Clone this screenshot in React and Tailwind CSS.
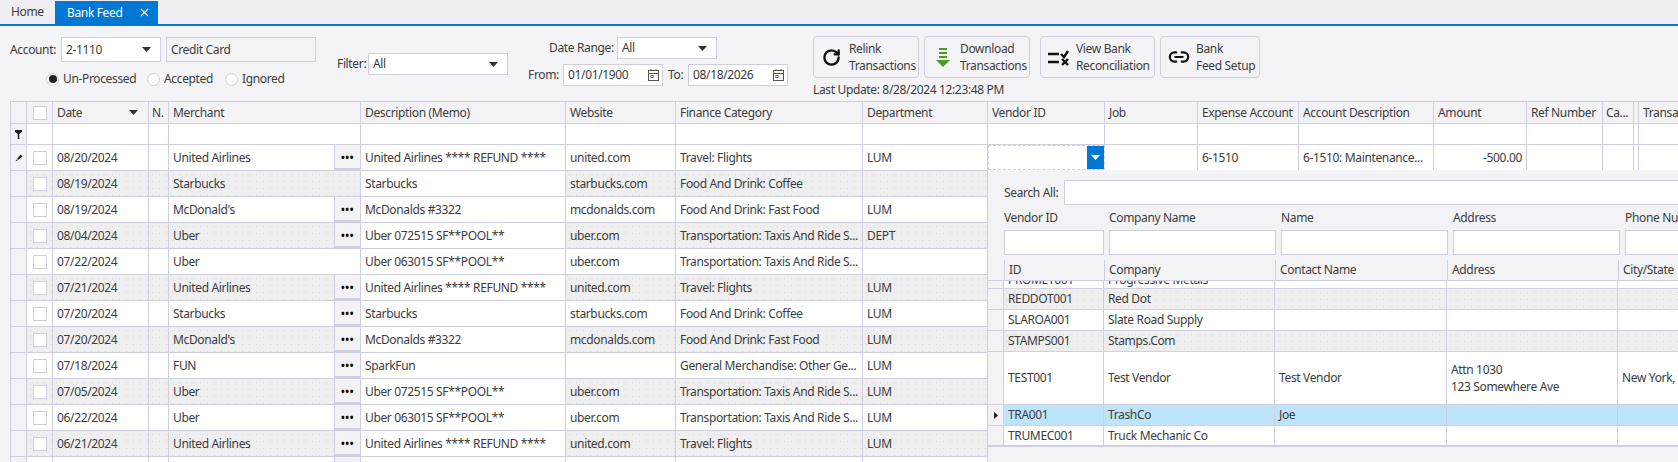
import React from "react";
import { Link2, RotateCw, X } from "lucide-react";

const line = "border-[#cfcfdf]";

const Caret = ({ className = "" }) => (
  <svg width="9" height="5" viewBox="0 0 9 5" className={className}><path d="M0 0h9L4.5 5z" fill="currentColor" /></svg>
);

const Calendar = () => (
  <svg width="13" height="14" viewBox="0 0 13 14" fill="none" stroke="#555">
    <rect x="1.5" y="2.5" width="10" height="10" />
    <path d="M1.5 5.5h10M4 1v2M9 1v2" />
    <rect x="4" y="7.5" width="2" height="2" />
  </svg>
);

const Combo = ({ value, className }) => (
  <div className={`flex items-center justify-between border ${line} bg-white pl-[4px] pr-[9px] ${className}`}>
    <span>{value}</span>
    <Caret className="text-[#333]" />
  </div>
);

const DateBox = ({ value, className }) => (
  <div className={`flex items-center justify-between border ${line} bg-white pl-[4px] pr-[2px] w-[100px] h-[22px] ${className}`}>
    <span>{value}</span>
    <Calendar />
  </div>
);

const Radio = ({ label, checked, className }) => (
  <div className={`flex items-center ${className}`}>
    <span className={`flex h-[13px] w-[13px] items-center justify-center rounded-full border ${line} bg-white`}>
      {checked && <span className="h-[8px] w-[8px] rounded-full bg-[#222]" />}
    </span>
    <span className="ml-[4px]">{label}</span>
  </div>
);

const ToolButton = ({ icon, top, bottom, className, textClass }) => (
  <div className={`flex h-[42px] items-center rounded-[4px] border ${line} ${className}`}>
    <div className="flex w-[35px] shrink-0 justify-center">{icon}</div>
    <div className={`leading-[17px] ${textClass}`}>
      <div>{top}</div>
      <div>{bottom}</div>
    </div>
  </div>
);

const Check = () => <span className={`block h-[14px] w-[14px] border ${line} bg-white`} />;

const columns = [
  { k: "date", w: "w-[96px]", label: "Date" },
  { k: "n", w: "w-[20px]", label: "N." },
  { k: "merchant", w: "w-[192px]", label: "Merchant" },
  { k: "desc", w: "w-[205px]", label: "Description (Memo)" },
  { k: "site", w: "w-[110px]", label: "Website" },
  { k: "cat", w: "w-[187px]", label: "Finance Category" },
  { k: "dept", w: "w-[125px]", label: "Department" },
  { k: "vendor", w: "w-[117px]", label: "Vendor ID" },
  { k: "job", w: "w-[93px]", label: "Job" },
  { k: "exp", w: "w-[101px]", label: "Expense Account" },
  { k: "acct", w: "w-[135px]", label: "Account Description" },
  { k: "amt", w: "w-[93px]", label: "Amount" },
  { k: "ref", w: "w-[76px]", label: "Ref Number" },
  { k: "ca", w: "w-[31px]", label: "Ca..." },
  { k: "tiny", w: "w-[5px]", label: "" },
  { k: "tr", w: "w-[120px]", label: "Transaction" },
];

const rows = [
  { date: "08/20/2024", merchant: "United Airlines", btn: true, desc: "United Airlines **** REFUND ****", site: "united.com", cat: "Travel: Flights", dept: "LUM", exp: "6-1510", acct: "6-1510: Maintenance...", amt: "-500.00" },
  { date: "08/19/2024", merchant: "Starbucks", desc: "Starbucks", site: "starbucks.com", cat: "Food And Drink: Coffee" },
  { date: "08/19/2024", merchant: "McDonald's", btn: true, desc: "McDonalds #3322", site: "mcdonalds.com", cat: "Food And Drink: Fast Food", dept: "LUM" },
  { date: "08/04/2024", merchant: "Uber", btn: true, desc: "Uber 072515 SF**POOL**", site: "uber.com", cat: "Transportation: Taxis And Ride S...", dept: "DEPT" },
  { date: "07/22/2024", merchant: "Uber", desc: "Uber 063015 SF**POOL**", site: "uber.com", cat: "Transportation: Taxis And Ride S..." },
  { date: "07/21/2024", merchant: "United Airlines", btn: true, desc: "United Airlines **** REFUND ****", site: "united.com", cat: "Travel: Flights", dept: "LUM" },
  { date: "07/20/2024", merchant: "Starbucks", btn: true, desc: "Starbucks", site: "starbucks.com", cat: "Food And Drink: Coffee", dept: "LUM" },
  { date: "07/20/2024", merchant: "McDonald's", btn: true, desc: "McDonalds #3322", site: "mcdonalds.com", cat: "Food And Drink: Fast Food", dept: "LUM" },
  { date: "07/18/2024", merchant: "FUN", btn: true, desc: "SparkFun", site: "", cat: "General Merchandise: Other Ge...", dept: "LUM" },
  { date: "07/05/2024", merchant: "Uber", btn: true, desc: "Uber 072515 SF**POOL**", site: "uber.com", cat: "Transportation: Taxis And Ride S...", dept: "LUM" },
  { date: "06/22/2024", merchant: "Uber", btn: true, desc: "Uber 063015 SF**POOL**", site: "uber.com", cat: "Transportation: Taxis And Ride S...", dept: "LUM" },
  { date: "06/21/2024", merchant: "United Airlines", btn: true, desc: "United Airlines **** REFUND ****", site: "united.com", cat: "Travel: Flights", dept: "LUM" },
  { date: "", merchant: "", btn: true, desc: "", site: "", cat: "", dept: "" },
];

const dither = "bg-[#efeff0] bg-[radial-gradient(#d6d6d6_0.6px,transparent_0.7px)] bg-[length:7px_7px]";

const HeaderRow = () => (
  <div className={`flex h-[22px] w-max border-b ${line} bg-[#f3f3f6]`}>
    <div className={`h-full w-[17px] border-x ${line}`} />
    <div className={`flex h-full w-[26px] items-center justify-center border-r ${line}`}><Check /></div>
    {columns.map((c) => (
      <div key={c.k} className={`flex h-full items-center overflow-hidden whitespace-nowrap border-r ${line} ${c.w} ${c.k === "n" || c.k === "ca" ? "pl-[3px]" : "pl-[4px]"} ${c.k === "date" ? "justify-between pr-[10px]" : ""}`}>
        <span>{c.label}</span>
        {c.k === "date" && <Caret className="text-[#333]" />}
      </div>
    ))}
  </div>
);

const FilterRow = () => (
  <div className={`flex h-[21px] w-max border-b ${line} bg-white`}>
    <div className={`flex h-full w-[17px] items-center justify-center border-x ${line} bg-[#f3f3f6]`}>
      <svg width="7" height="9" viewBox="0 0 7 9" fill="#222"><path d="M0 0h7v2L4.3 4v5H2.7V4L0 2z" /></svg>
    </div>
    <div className={`h-full w-[26px] border-r ${line}`} />
    {columns.map((c) => <div key={c.k} className={`h-full border-r ${line} ${c.w}`} />)}
  </div>
);

const DataRow = ({ r, i }) => {
  const gray = i % 2 === 1;
  const bg = gray ? dither : "bg-white";
  return (
    <div className={`flex w-max border-b ${line} ${i === 0 ? "h-[26px]" : "h-[26px]"}`}>
      <div className={`flex h-full w-[17px] items-center justify-center border-x ${line} bg-[#f3f3f6]`}>
        {i === 0 && (
          <svg width="8" height="8" viewBox="0 0 8 8" fill="#222"><path d="M5.5.5 7.5 2.5 3 6 2 5zM1.6 5.4l1 1L.5 7.5z" /></svg>
        )}
      </div>
      <div className={`flex h-full w-[26px] items-center justify-center border-r ${line} ${bg}`}><Check /></div>
      {columns.map((c) => {
        const base = `relative flex h-full items-center overflow-hidden whitespace-nowrap border-r ${line} ${c.w}`;
        if (c.k === "desc") return <div key={c.k} className={`${base} bg-white pl-[4px]`}>{r.desc}</div>;
        if (c.k === "merchant") {
          return (
            <div key={c.k} className={`${base} ${bg}`}>
              <span className="flex-1 pl-[4px]">{r.merchant}</span>
              {r.btn && (
                <span className={`flex h-full w-[26px] items-center justify-center border-b-2 border-l ${line} bg-[#f3f3f6] text-[10px] font-bold tracking-[0.5px] text-black`}>•••</span>
              )}
            </div>
          );
        }
        if (c.k === "vendor" && i === 0) {
          return (
            <div key={c.k} className={`${base} justify-end border border-dashed border-[#8fa6bd] bg-white`}>
              <span className="flex h-full w-[17px] items-center justify-center bg-[#0078d4] text-white"><Caret /></span>
            </div>
          );
        }
        return (
          <div key={c.k} className={`${base} ${bg} pl-[4px] ${c.k === "amt" ? "justify-end pr-[4px]" : ""}`}>{r[c.k]}</div>
        );
      })}
    </div>
  );
};

const popupCols = [
  { k: "id", w: "w-[100px]", label: "ID" },
  { k: "co", w: "w-[171px]", label: "Company" },
  { k: "contact", w: "w-[172px]", label: "Contact Name" },
  { k: "addr", w: "w-[171px]", label: "Address" },
  { k: "city", w: "w-[100px]", label: "City/State" },
];

const popupRows = [
  { id: "REDDOT001", co: "Red Dot", h: "h-[21px]", gray: true },
  { id: "SLAROA001", co: "Slate Road Supply", h: "h-[21px]" },
  { id: "STAMPS001", co: "Stamps.Com", h: "h-[21px]", gray: true },
  { id: "TEST001", co: "Test Vendor", contact: "Test Vendor", addr: ["Attn 1030", "123 Somewhere Ave"], city: "New York,", h: "h-[53px]" },
  { id: "TRA001", co: "TrashCo", contact: "Joe", h: "h-[21px]", sel: true },
  { id: "TRUMEC001", co: "Truck Mechanic Co", h: "h-[21px]" },
];

const Popup = () => (
  <div className={`absolute bottom-0 left-[987px] right-0 top-[170px] overflow-hidden border-l ${line} bg-[#f3f3f6]`}>
    <div className="ml-[16px] mt-[10px] flex h-[25px] w-[800px] items-center">
      <span className="w-[60px]">Search All:</span>
      <span className={`h-full flex-1 border ${line} bg-white`} />
    </div>
    <div className="ml-[16px] flex h-[25px] w-[800px] items-center">
      <span className="w-[105px]">Vendor ID</span>
      <span className="w-[172px]">Company Name</span>
      <span className="w-[172px]">Name</span>
      <span className="w-[172px]">Address</span>
      <span>Phone Number</span>
    </div>
    <div className="ml-[16px] flex h-[25px] w-[800px] gap-[5px]">
      <span className={`h-full w-[100px] border ${line} bg-white`} />
      <span className={`h-full w-[167px] border ${line} bg-white`} />
      <span className={`h-full w-[167px] border ${line} bg-white`} />
      <span className={`h-full w-[167px] border ${line} bg-white`} />
      <span className={`h-full w-[167px] border ${line} bg-white`} />
    </div>
    <div className={`mt-[5px] flex h-[21px] w-max border-b ${line} pl-[16px]`}>
      {popupCols.map((c) => (
        <div key={c.k} className={`flex h-full items-center border-l ${line} pl-[4px] ${c.w}`}>{c.label}</div>
      ))}
    </div>
    <div className={`flex h-[8px] w-max items-end overflow-hidden border-b ${line} bg-white`}>
      <div className={`h-full w-[16px] border-r ${line} bg-[#f3f3f6]`} />
      {popupCols.map((c) => (
        <div key={c.k} className={`relative h-full overflow-hidden whitespace-nowrap border-r ${line} pl-[4px] ${c.w}`}>
          <span className="absolute -top-[9px] left-[4px]">{c.k === "id" ? "PROMET001" : c.k === "co" ? "Progressive Metals" : ""}</span>
        </div>
      ))}
    </div>
    {popupRows.map((r, ri) => (
      <div key={r.id} className={`flex w-max border-b ${line} ${r.h} ${ri === 5 ? "border-b-2" : ""}`}>
        <div className={`flex h-full w-[16px] items-center justify-center border-r ${line} bg-[#f3f3f6]`}>
          {r.sel && <svg width="4" height="7" viewBox="0 0 4 7" fill="#222"><path d="M0 0l4 3.5L0 7z" /></svg>}
        </div>
        {popupCols.map((c) => (
          <div key={c.k} className={`flex h-full items-center whitespace-nowrap border-r ${line} pl-[4px] ${c.w} ${r.sel ? "bg-[#bde4fb]" : r.gray ? dither : "bg-white"}`}>
            {Array.isArray(r[c.k]) ? <div className="leading-[17px]">{r[c.k].map((t) => <div key={t}>{t}</div>)}</div> : r[c.k]}
          </div>
        ))}
      </div>
    ))}
  </div>
);

export default function App() {
  return (
    <div className="relative h-[462px] w-full overflow-hidden bg-[#f4f4f7] font-['Noto_Sans','Open_Sans',sans-serif] text-[12px] leading-[16px] tracking-[-0.35px] text-[#3c3c3c]">
      <div className="flex h-[26px] border-b-2 border-[#0078d4] bg-[#efeff3]">
        <div className="flex w-[55px] items-center pl-[11px]">Home</div>
        <div className="mt-[1px] flex h-[23px] w-[103px] items-center justify-between bg-[#0078d4] pl-[12px] pr-[7px] text-white">
          <span>Bank Feed</span>
          <X size={13} strokeWidth={2} />
        </div>
      </div>

      <div className="flex h-[75px] pt-[11px]">
        <div className="ml-[10px] w-[306px]">
          <div className="flex items-center">
            <span className="w-[51px]">Account:</span>
            <Combo value="2-1110" className="h-[25px] w-[100px]" />
            <div className={`ml-[5px] flex h-[25px] w-[150px] items-center border ${line} pl-[4px]`}>Credit Card</div>
          </div>
          <div className="ml-[36px] mt-[9px] flex items-center">
            <Radio label="Un-Processed" checked className="w-[101px]" />
            <Radio label="Accepted" className="w-[78px]" />
            <Radio label="Ignored" />
          </div>
        </div>
        <div className="ml-[21px] mt-[16px] flex h-[22px] items-center">
          <span className="w-[31px]">Filter:</span>
          <Combo value="All" className="h-[22px] w-[140px]" />
        </div>
        <div className="ml-[20px] w-[260px]">
          <div className="flex h-[22px] items-center pl-[21px]">
            <span className="w-[68px]">Date Range:</span>
            <Combo value="All" className="h-[22px] w-[100px]" />
          </div>
          <div className="mt-[5px] flex h-[22px] items-center">
            <span className="w-[35px]">From:</span>
            <DateBox value="01/01/1900" />
            <span className="w-[25px] pl-[5px]">To:</span>
            <DateBox value="08/18/2026" />
          </div>
        </div>
        <div className="ml-[25px] -mt-[1px]">
          <div className="flex">
            <ToolButton
              className="w-[106px]"
              icon={<RotateCw size={19} strokeWidth={3} color="#111" />}
              top="Relink"
              bottom="Transactions"
            />
            <ToolButton
              className="ml-[5px] w-[106px]"
              icon={
                <svg width="16" height="21" viewBox="0 0 16 21" fill="#4a9d20">
                  <rect x="4" y="1" width="8" height="2" />
                  <rect x="4" y="5" width="8" height="2" />
                  <rect x="4" y="9" width="8" height="2" />
                  <path d="M1 13h14l-7 7z" />
                </svg>
              }
              top="Download"
              bottom="Transactions"
            />
            <ToolButton
              className="ml-[10px] w-[115px]"
              icon={
                <svg width="21" height="17" viewBox="0 0 21 17" fill="none" stroke="#111" strokeWidth="2.4">
                  <path d="M0 5h11M0 13h11M13 5l3 3 4-6M14 10l6 6M20 10l-6 6" />
                </svg>
              }
              top="View Bank"
              bottom="Reconciliation"
            />
            <ToolButton
              className="ml-[5px] w-[100px]"
              icon={<Link2 size={22} strokeWidth={2.4} color="#111" />}
              top="Bank"
              bottom="Feed Setup"
            />
          </div>
          <div className="mt-[4px]">Last Update: 8/28/2024 12:23:48 PM</div>
        </div>
      </div>

      <div className="ml-[10px]">
        <div className={`w-max border-t ${line}`}>
          <HeaderRow />
          <FilterRow />
          {rows.map((r, i) => <DataRow key={i} r={r} i={i} />)}
        </div>
      </div>

      <Popup />
    </div>
  );
}
